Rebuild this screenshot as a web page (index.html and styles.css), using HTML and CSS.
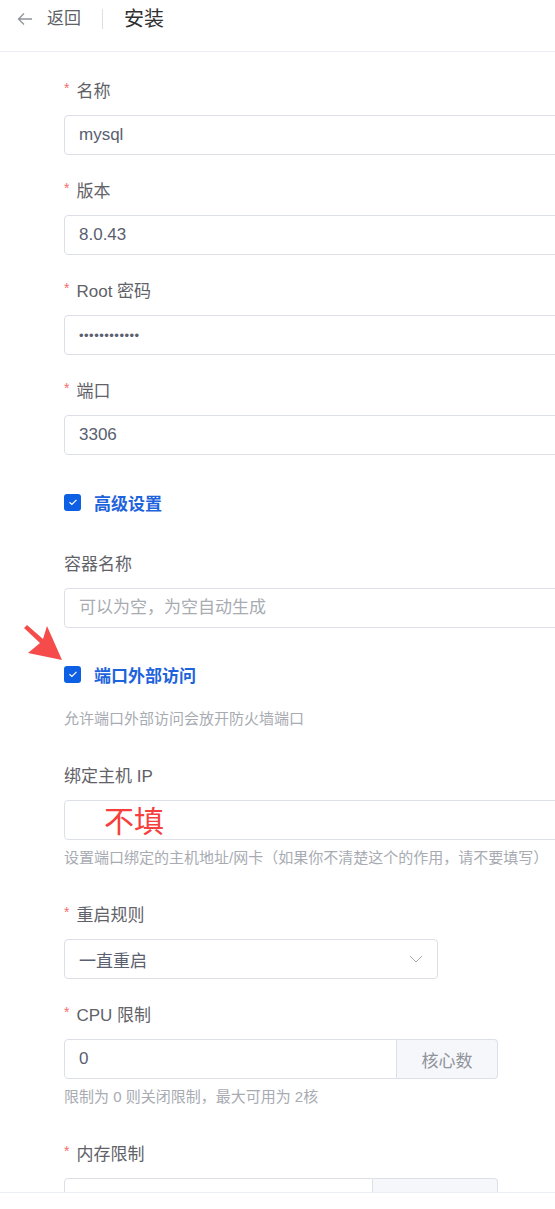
FILE: index.html
```html
<!DOCTYPE html>
<html lang="zh-CN">
<head>
  <meta charset="utf-8">
  <meta name="viewport" content="width=device-width, initial-scale=1.0">
  <title>安装</title>
  <link rel="stylesheet" href="styles.css">
</head>
<body>
  <!-- Page header -->
  <header class="page-header">
    <a class="back" href="#">
      <svg class="back-icon" viewBox="0 0 16 16" width="16" height="16">
        <path d="M15 8H1.5M7 2.5L1.5 8 7 13.5" fill="none" stroke="#909399" stroke-width="1.3"/>
      </svg>
      <span>返回</span>
    </a>
    <span class="divider"></span>
    <h1 class="title">安装</h1>
  </header>

  <main class="form">
    <div class="item">
      <label class="label required">名称</label>
      <input class="input full" type="text" value="mysql">
    </div>

    <div class="item">
      <label class="label required">版本</label>
      <input class="input full" type="text" value="8.0.43">
    </div>

    <div class="item">
      <label class="label required">Root 密码</label>
      <input class="input full" type="password" value="mysqlpass123">
    </div>

    <div class="item">
      <label class="label required">端口</label>
      <input class="input full" type="text" value="3306">
    </div>

    <div class="check-row first">
      <span class="checkbox"><svg viewBox="0 0 16 16" width="16" height="16"><path d="M4.5 8.2l2.4 2.3 4.6-4.6" fill="none" stroke="#fff" stroke-width="1.2"/></svg></span>
      <span class="check-text">高级设置</span>
    </div>

    <div class="item">
      <label class="label">容器名称</label>
      <input class="input full" type="text" placeholder="可以为空，为空自动生成">
    </div>

    <div class="check-row second">
      <!-- annotation arrow -->
      <svg class="note-arrow" viewBox="0 0 50 50" width="50" height="50">
        <polygon points="5,13 8,10 24,24 28,11 43,45 9,38 21,28" fill="#f64b4b"/>
      </svg>
      <span class="checkbox"><svg viewBox="0 0 16 16" width="16" height="16"><path d="M4.5 8.2l2.4 2.3 4.6-4.6" fill="none" stroke="#fff" stroke-width="1.2"/></svg></span>
      <span class="check-text">端口外部访问</span>
    </div>
    <p class="help after-check">允许端口外部访问会放开防火墙端口</p>

    <div class="item tail">
      <label class="label">绑定主机 IP</label>
      <div class="field">
        <input class="input full" type="text">
        <span class="note-text">不填</span>
      </div>
      <p class="help">设置端口绑定的主机地址/网卡（如果你不清楚这个的作用，请不要填写）</p>
    </div>

    <div class="item">
      <label class="label required">重启规则</label>
      <div class="select">
        <span>一直重启</span>
        <svg viewBox="0 0 14 8" width="14" height="8"><path d="M1 1l6 6 6-6" fill="none" stroke="#a8abb2" stroke-width="1"/></svg>
      </div>
    </div>

    <div class="item tail">
      <label class="label required">CPU 限制</label>
      <div class="group">
        <input class="input grow" type="text" value="0">
        <span class="append cpu">核心数</span>
      </div>
      <p class="help">限制为 0 则关闭限制，最大可用为 2核</p>
    </div>

    <div class="item">
      <label class="label required">内存限制</label>
      <div class="group">
        <input class="input grow" type="text">
        <span class="append mem"></span>
      </div>
    </div>
  </main>

  <footer class="page-footer"></footer>
</body>
</html>
```

FILE: styles.css
```css
/* Base */
body {
  margin: 0;
  background: #fff;
  font-family: "Liberation Sans", "Noto Sans CJK SC", sans-serif;
  color: #606266;
  overflow: hidden;
}

/* Header */
.page-header {
  box-sizing: border-box;
  height: 52px;
  border-bottom: 1px solid #ebeef5;
  display: flex;
  align-items: center;
  padding: 0 0 14px 17px;
}

.back {
  display: flex;
  align-items: center;
  gap: 14px;
  color: #606266;
  font-size: 17px;
  line-height: 22px;
  text-decoration: none;
}

.divider {
  width: 1px;
  height: 20px;
  background: #dcdfe6;
  margin: 0 21px;
}

.title {
  margin: 0;
  font-size: 20px;
  line-height: 24px;
  font-weight: 400;
  color: #303133;
}

/* Form */
.form {
  padding: 26px 0 0 64px;
}

.item {
  margin-bottom: 23px;
}

.item.tail {
  margin-bottom: 33px;
}

.label {
  display: flex;
  align-items: center;
  height: 22px;
  font-size: 17px;
  margin-bottom: 15px;
  color: #5f6268;
}

.label.required::before {
  content: "*";
  color: #f56c6c;
  font-size: 14px;
  line-height: 14px;
  margin-right: 7px;
  margin-top: -3px;
}

.input {
  box-sizing: border-box;
  height: 40px;
  border: 1px solid #dcdfe6;
  border-radius: 4px;
  padding: 0 14px;
  font-family: inherit;
  font-size: 17px;
  color: #5a6070;
  background: #fff;
  outline: none;
  display: block;
}

.input::placeholder {
  color: #a8abb2;
}

.input[type="password"] {
  font-size: 13px;
  letter-spacing: 0.5px;
}

.input.full {
  width: 520px;
}

.field {
  position: relative;
}

/* red annotation over the input */
.note-text {
  position: absolute;
  left: 40px;
  top: 4px;
  font-size: 30px;
  line-height: 36px;
  color: #f5403d;
}

/* Checkbox rows */
.check-row {
  position: relative;
  display: flex;
  align-items: center;
  gap: 13px;
  height: 48px;
}

.check-row.first {
  margin-bottom: 25px;
}

.check-row.second {
  height: 46px;
}

.checkbox {
  width: 17px;
  height: 17px;
  border-radius: 3px;
  background: #0d5fe3;
  display: flex;
  align-items: center;
  justify-content: center;
}

.check-text {
  font-size: 17px;
  font-weight: 600;
  color: #1d63dc;
}

.note-arrow {
  position: absolute;
  left: -45px;
  top: -36px;
}

/* Helper text */
.help {
  margin: 7px 0 0;
  font-size: 15px;
  line-height: 22px;
  color: #a8abb2;
}

.help.after-check {
  margin: 11px 0 33px;
}

/* Select */
.select {
  box-sizing: border-box;
  width: 374px;
  height: 40px;
  border: 1px solid #dcdfe6;
  border-radius: 4px;
  padding: 0 14px;
  display: flex;
  align-items: center;
  justify-content: space-between;
  font-size: 17px;
  color: #5a6070;
}

/* Input with append */
.group {
  display: flex;
  width: 434px;
  height: 40px;
}

.input.grow {
  flex: 1;
  min-width: 0;
  border-radius: 4px 0 0 4px;
}

.append {
  box-sizing: border-box;
  display: flex;
  align-items: center;
  justify-content: center;
  background: #f5f7fa;
  border: 1px solid #dcdfe6;
  border-left: 0;
  border-radius: 0 4px 4px 0;
  font-size: 17px;
  color: #909399;
}

.append.cpu {
  width: 101px;
}

.append.mem {
  width: 125px;
}

/* Footer bar */
.page-footer {
  position: fixed;
  left: 0;
  right: 0;
  bottom: 0;
  height: 16px;
  background: #fff;
  border-top: 1px solid #ebeef5;
}
```
